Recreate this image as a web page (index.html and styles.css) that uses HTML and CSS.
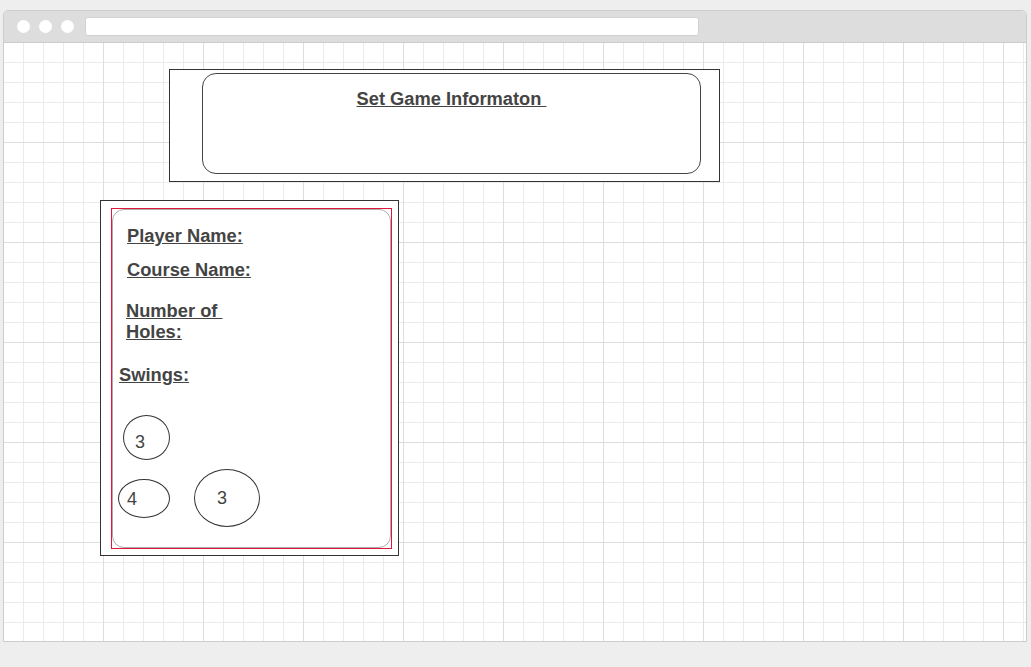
FILE: index.html
```html
<!DOCTYPE html>
<html lang="en">
<head>
<meta charset="utf-8">
<title>Set Game Information</title>
<link rel="stylesheet" href="styles.css">
</head>
<body>
<div class="window">
  <div class="titlebar">
    <span class="light"></span>
    <span class="light"></span>
    <span class="light"></span>
    <div class="urlbar"></div>
  </div>
  <div class="canvas">
    <div class="title-box">
      <div class="title-inner">
        <span class="title-text">Set Game Informaton&nbsp;</span>
      </div>
    </div>
    <div class="card">
      <div class="card-frame">
        <div class="card-body">
          <p class="label label-player">Player Name:</p>
          <p class="label label-course">Course Name:</p>
          <p class="label label-holes">Number of&nbsp;<br>Holes:</p>
          <p class="label label-swings">Swings:</p>
          <div class="swing-row row-one">
            <div class="bubble b1">3</div>
          </div>
          <div class="swing-row row-two">
            <div class="bubble b2">4</div>
            <div class="bubble b3">3</div>
          </div>
        </div>
      </div>
    </div>
  </div>
</div>
</body>
</html>
```

FILE: styles.css
```css
html, body {
  margin: 0;
  padding: 0;
}

body {
  background: #eeeeee;
  width: 1031px;
  height: 667px;
  overflow: hidden;
  font-family: "Liberation Sans", Arial, sans-serif;
}

.window {
  box-sizing: border-box;
  margin: 10px 0 0 3px;
  width: 1024px;
  height: 632px;
  border: 1px solid #cccccc;
  border-radius: 5px 5px 0 0;
  overflow: hidden;
  background: #ffffff;
}

.titlebar {
  box-sizing: border-box;
  height: 32px;
  background: #dddddd;
  border-bottom: 1px solid #cccccc;
  display: flex;
  align-items: center;
  padding-left: 13px;
  gap: 9px;
}

.light {
  width: 13px;
  height: 13px;
  border-radius: 50%;
  background: #ffffff;
  flex: none;
}

.urlbar {
  box-sizing: border-box;
  margin-left: 2px;
  width: 614px;
  height: 19px;
  background: #ffffff;
  border: 1px solid #d2d2d2;
  border-radius: 3px;
}

.canvas {
  height: 598px;
  padding-top: 26px;
  box-sizing: border-box;
  background-color: #ffffff;
  background-image:
    linear-gradient(to right, #dedede 1px, transparent 1px),
    linear-gradient(to bottom, #dedede 1px, transparent 1px),
    linear-gradient(to right, #ebebeb 1px, transparent 1px),
    linear-gradient(to bottom, #ebebeb 1px, transparent 1px);
  background-size: 100px 100px, 100px 100px, 20px 20px, 20px 20px;
  background-position: -1px -1px, -1px -1px, -1px -1px, -1px -1px;
}

.title-box {
  box-sizing: border-box;
  margin-left: 165px;
  width: 551px;
  height: 113px;
  border: 1px solid #333333;
  background: #ffffff;
  padding: 3px 0 0 32px;
}

.title-inner {
  box-sizing: border-box;
  width: 499px;
  height: 101px;
  border: 1px solid #444444;
  border-radius: 14px;
  background: #ffffff;
  padding-top: 14px;
  text-align: center;
}

.title-text {
  font-size: 18.3px;
  line-height: 21px;
  font-weight: bold;
  color: #444444;
  text-decoration: underline;
}

.card {
  box-sizing: border-box;
  margin: 18px 0 0 96px;
  width: 299px;
  height: 356px;
  border: 1px solid #333333;
  background: #ffffff;
  padding: 7px 0 0 10px;
}

.card-frame {
  box-sizing: border-box;
  width: 281px;
  height: 341px;
  border: 1px solid #e0163c;
}

.card-body {
  box-sizing: border-box;
  width: 279px;
  height: 339px;
  border: 1px solid #acacac;
  border-radius: 12px;
  padding-top: 15px;
}

.label {
  margin: 0;
  font-size: 18.3px;
  line-height: 21px;
  font-weight: bold;
  color: #444444;
  text-decoration: underline;
}

.label-player {
  margin-left: 14px;
}

.label-course {
  margin: 13px 0 0 14px;
}

.label-holes {
  margin: 20px 0 0 13px;
}

.label-swings {
  margin: 22px 0 0 6px;
}

.swing-row {
  display: flex;
  align-items: center;
}

.row-one {
  margin-top: 30px;
}

.row-two {
  margin-top: 9px;
}

.bubble {
  box-sizing: border-box;
  border: 1px solid #333333;
  border-radius: 50%;
  font-size: 18px;
  line-height: 21px;
  color: #444444;
  flex: none;
}

.b1 {
  width: 47px;
  height: 45px;
  margin-left: 10px;
  padding: 16px 0 0 11px;
}

.b2 {
  width: 52px;
  height: 39px;
  margin-left: 5px;
  padding: 9px 0 0 8px;
}

.b3 {
  width: 66px;
  height: 58px;
  margin-left: 24px;
  padding: 18px 0 0 22px;
}
```
